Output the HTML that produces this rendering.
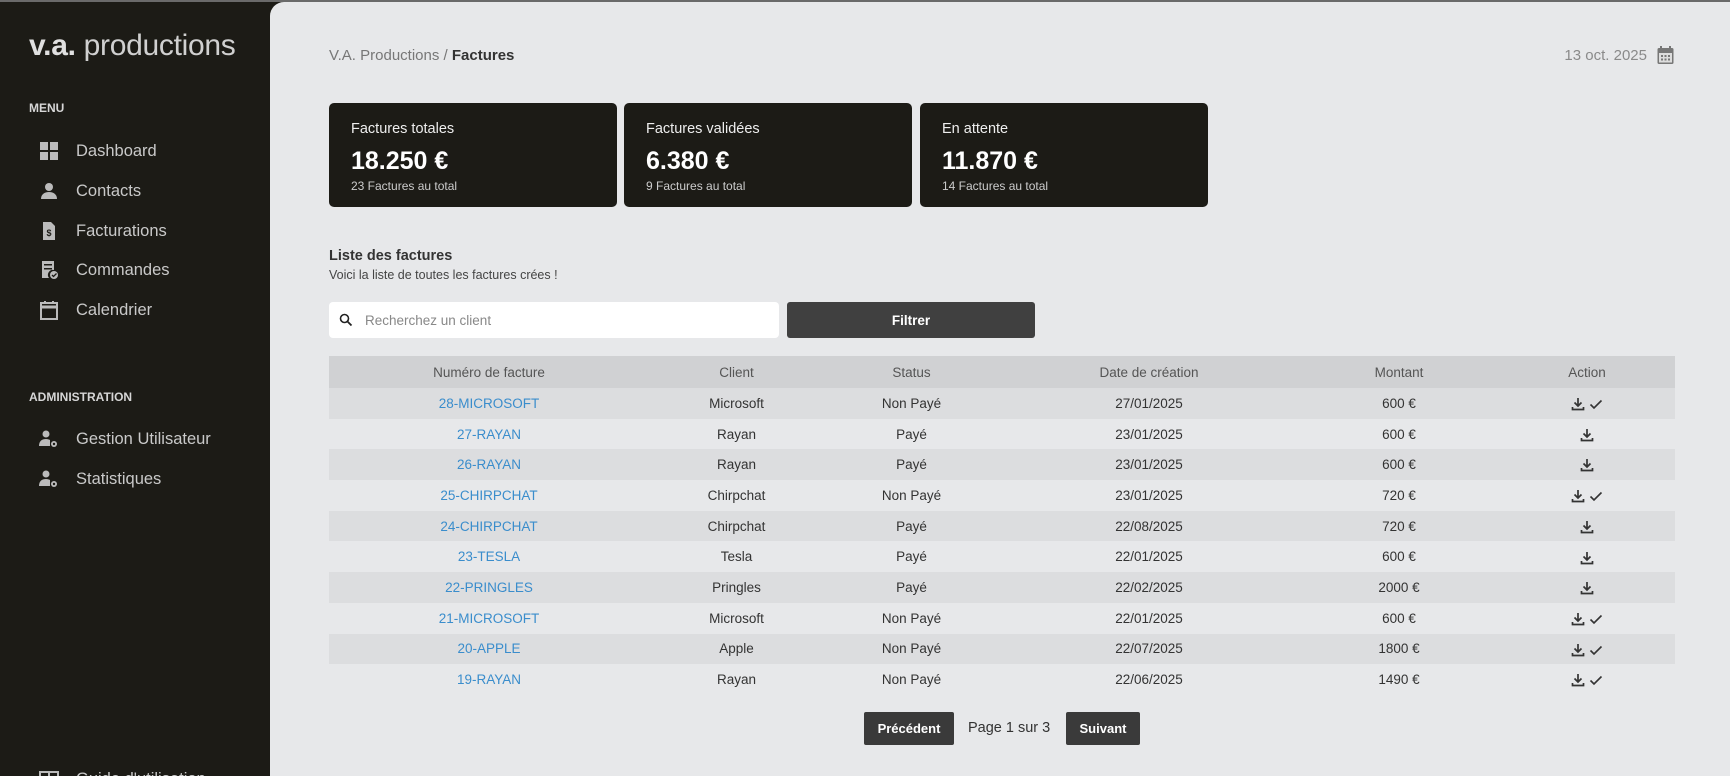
<!DOCTYPE html>
<html><head><meta charset="utf-8"><style>
*{box-sizing:border-box;margin:0;padding:0}
html,body{width:1730px;height:776px;overflow:hidden}
body{background:#1c1b16;font-family:"Liberation Sans",sans-serif;position:relative}
.topline{position:absolute;left:0;top:0;width:1730px;height:2px;background:#6a6a6a;z-index:3}
.side{position:absolute;left:0;top:0;width:270px;height:776px;background:#1c1b16;color:#c9c9c9;overflow:hidden}
.logo{position:absolute;left:29px;top:29px;font-size:30px;color:#e0e0e0;letter-spacing:-0.3px}
.logo b{font-weight:900}
.logo span{font-weight:normal;color:#d0d0d0}
.sec{position:absolute;left:29px;font-size:12px;font-weight:bold;color:#d6d6d6}
.item{position:absolute;left:39px;font-size:16.5px;color:#c9c9c9;display:flex;align-items:center;height:22px}
.item svg{width:20px;height:20px;margin-right:17px}
.main{position:absolute;left:270px;top:2px;width:1460px;height:774px;background:#e7e8ea;border-top-left-radius:14px}
.crumb{position:absolute;left:59px;top:45px;font-size:15px;color:#777}
.crumb b{color:#333;font-weight:bold}
.date{position:absolute;right:56px;top:44px;font-size:15px;color:#8a8a8a;display:flex;align-items:center}
.card{position:absolute;top:101px;width:288px;height:104px;background:#1c1b16;border-radius:5px;color:#fff;padding:18px 22px}
.card .t{font-size:14.5px;color:#eee}
.card .v{font-size:25px;font-weight:bold;margin-top:10px}
.card .s{font-size:12px;color:#ccc;margin-top:3px}
.lt{position:absolute;left:59px;top:246px;font-size:14.5px;font-weight:bold;color:#333}
.ls{position:absolute;left:59px;top:266px;font-size:12.5px;color:#444}
.search{position:absolute;left:59px;top:300px;width:450px;height:36px;background:#fff;border-radius:4px;display:flex;align-items:center;padding-left:10px;font-size:13.5px;color:#888}
.filt{position:absolute;left:517px;top:300px;width:248px;height:36px;background:#404040;border-radius:3px;color:#fff;font-size:13.5px;font-weight:bold;display:flex;align-items:center;justify-content:center}
table{position:absolute;left:59px;top:354px;width:1346px;border-collapse:collapse;font-size:13.5px;color:#333}
th{background:#d0d1d3;height:32px;font-weight:normal;color:#555}
td{height:30.7px;text-align:center}
tr:nth-child(even) td{background:#dcdddf}
td a{color:#3a8dcc;text-decoration:none}
.btn{position:absolute;top:710px;height:33px;background:#3a3a3a;color:#fff;font-size:13px;font-weight:bold;display:flex;align-items:center;justify-content:center;border-radius:2px}
.pg{position:absolute;left:698px;top:718px;font-size:14.5px;color:#333}
</style></head><body>
<div class="topline"></div>
<div class="side">
<div class="logo"><b>v.a.</b> <span>productions</span></div>
<div class="sec" style="top:101px">MENU</div>
<div class="item" style="top:140px"><svg viewBox="0 0 20 20" fill="#bbb"><rect x="1" y="1" width="8" height="8"/><rect x="11" y="1" width="8" height="8"/><rect x="1" y="11" width="8" height="8"/><rect x="11" y="11" width="8" height="8"/></svg>Dashboard</div>
<div class="item" style="top:180px"><svg viewBox="0 0 20 20" fill="#bbb"><circle cx="10" cy="6" r="4"/><path d="M2 18c0-5 4-7 8-7s8 2 8 7z"/></svg>Contacts</div>
<div class="item" style="top:220px"><svg viewBox="0 0 20 20"><path d="M4 1h8l4 4v14H4z" fill="#bbb"/><text x="10" y="15" font-size="9" font-weight="bold" text-anchor="middle" fill="#1c1b16" font-family="Liberation Sans">$</text></svg>Facturations</div>
<div class="item" style="top:259px"><svg viewBox="0 0 20 20" fill="#bbb"><path d="M3 1h12v9a5 5 0 0 0-5 8H3z"/><circle cx="15" cy="15" r="4"/><path d="M13 15l1.5 1.5 3-3" stroke="#1c1b16" stroke-width="1.3" fill="none"/><rect x="5" y="4" width="8" height="1.5" fill="#1c1b16"/><rect x="5" y="8" width="8" height="1.5" fill="#1c1b16"/></svg>Commandes</div>
<div class="item" style="top:299px"><svg viewBox="0 0 20 20" fill="none" stroke="#bbb" stroke-width="2"><rect x="2" y="3" width="16" height="16"/><path d="M2 7h16" stroke-width="3"/><path d="M6 1v3M14 1v3"/></svg>Calendrier</div>
<div class="sec" style="top:390px">ADMINISTRATION</div>
<div class="item" style="top:428px"><svg viewBox="0 0 20 20" fill="#bbb"><circle cx="7" cy="5" r="3.5"/><path d="M0 17c0-5 3-7 7-7 2 0 3 .5 4 1v6z"/><circle cx="15" cy="15" r="3"/><circle cx="15" cy="15" r="1.2" fill="#1c1b16"/></svg>Gestion Utilisateur</div>
<div class="item" style="top:468px"><svg viewBox="0 0 20 20" fill="#bbb"><circle cx="7" cy="5" r="3.5"/><path d="M0 17c0-5 3-7 7-7 2 0 3 .5 4 1v6z"/><circle cx="15" cy="15" r="3"/><circle cx="15" cy="15" r="1.2" fill="#1c1b16"/></svg>Statistiques</div>
<div class="item" style="top:768px"><svg viewBox="0 0 20 20" fill="none" stroke="#bbb" stroke-width="2"><rect x="1" y="3" width="18" height="14"/><path d="M10 3v14"/></svg>Guide d'utilisation</div>
</div>
<div class="main">
<div class="crumb">V.A. Productions / <b>Factures</b></div>
<div class="date">13 oct. 2025<svg style="margin-left:10px" width="17" height="18" viewBox="0 0 17 18"><rect x="0.5" y="2" width="16" height="16" rx="1.5" fill="#777"/><rect x="2" y="7" width="13" height="9.5" fill="#ddd"/><path d="M4 0v4M13 0v4" stroke="#777" stroke-width="2"/><g fill="#777"><rect x="4" y="9" width="2" height="2"/><rect x="7.5" y="9" width="2" height="2"/><rect x="11" y="9" width="2" height="2"/><rect x="4" y="12.5" width="2" height="2"/><rect x="7.5" y="12.5" width="2" height="2"/><rect x="11" y="12.5" width="2" height="2"/></g></svg></div>
<div class="card" style="left:59px"><div class="t">Factures totales</div><div class="v">18.250 €</div><div class="s">23 Factures au total</div></div>
<div class="card" style="left:354px"><div class="t">Factures validées</div><div class="v">6.380 €</div><div class="s">9 Factures au total</div></div>
<div class="card" style="left:650px"><div class="t">En attente</div><div class="v">11.870 €</div><div class="s">14 Factures au total</div></div>
<div class="lt">Liste des factures</div>
<div class="ls">Voici la liste de toutes les factures crées !</div>
<div class="search"><svg width="14" height="14" viewBox="0 0 14 14" style="margin-right:12px"><circle cx="5.5" cy="5.5" r="4" stroke="#222" stroke-width="1.6" fill="none"/><path d="M8.5 8.5l4 4" stroke="#222" stroke-width="1.8"/></svg>Recherchez un client</div>
<div class="filt">Filtrer</div>
<table>
<colgroup><col style="width:320px"><col style="width:175px"><col style="width:175px"><col style="width:300px"><col style="width:200px"><col style="width:176px"></colgroup>
<tr><th>Numéro de facture</th><th>Client</th><th>Status</th><th>Date de création</th><th>Montant</th><th>Action</th></tr>
<tr><td><a>28-MICROSOFT</a></td><td>Microsoft</td><td>Non Payé</td><td>27/01/2025</td><td>600 €</td><td class="a2"></td></tr>
<tr><td><a>27-RAYAN</a></td><td>Rayan</td><td>Payé</td><td>23/01/2025</td><td>600 €</td><td class="a1"></td></tr>
<tr><td><a>26-RAYAN</a></td><td>Rayan</td><td>Payé</td><td>23/01/2025</td><td>600 €</td><td class="a1"></td></tr>
<tr><td><a>25-CHIRPCHAT</a></td><td>Chirpchat</td><td>Non Payé</td><td>23/01/2025</td><td>720 €</td><td class="a2"></td></tr>
<tr><td><a>24-CHIRPCHAT</a></td><td>Chirpchat</td><td>Payé</td><td>22/08/2025</td><td>720 €</td><td class="a1"></td></tr>
<tr><td><a>23-TESLA</a></td><td>Tesla</td><td>Payé</td><td>22/01/2025</td><td>600 €</td><td class="a1"></td></tr>
<tr><td><a>22-PRINGLES</a></td><td>Pringles</td><td>Payé</td><td>22/02/2025</td><td>2000 €</td><td class="a1"></td></tr>
<tr><td><a>21-MICROSOFT</a></td><td>Microsoft</td><td>Non Payé</td><td>22/01/2025</td><td>600 €</td><td class="a2"></td></tr>
<tr><td><a>20-APPLE</a></td><td>Apple</td><td>Non Payé</td><td>22/07/2025</td><td>1800 €</td><td class="a2"></td></tr>
<tr><td><a>19-RAYAN</a></td><td>Rayan</td><td>Non Payé</td><td>22/06/2025</td><td>1490 €</td><td class="a2"></td></tr>
</table>
<div class="btn" style="left:594px;width:90px">Précédent</div>
<div class="pg">Page 1 sur 3</div>
<div class="btn" style="left:796px;width:74px">Suivant</div>
</div>
<script>
var dl='<svg width="14" height="14" viewBox="0 0 14 14" style="vertical-align:middle"><path d="M7 1v8M3.5 5.5L7 9l3.5-3.5" stroke="#333" stroke-width="1.7" fill="none"/><path d="M1.5 10v2.5h11V10" stroke="#333" stroke-width="1.7" fill="none"/></svg>';
var ck='<svg width="14" height="14" viewBox="0 0 14 14" style="vertical-align:middle;margin-left:4px"><path d="M1.5 7.5l3.5 3.5 7.5-7.5" stroke="#333" stroke-width="1.6" fill="none"/></svg>';
document.querySelectorAll('.a1').forEach(function(e){e.innerHTML=dl});
document.querySelectorAll('.a2').forEach(function(e){e.innerHTML=dl+ck});
</script>
</body></html>
